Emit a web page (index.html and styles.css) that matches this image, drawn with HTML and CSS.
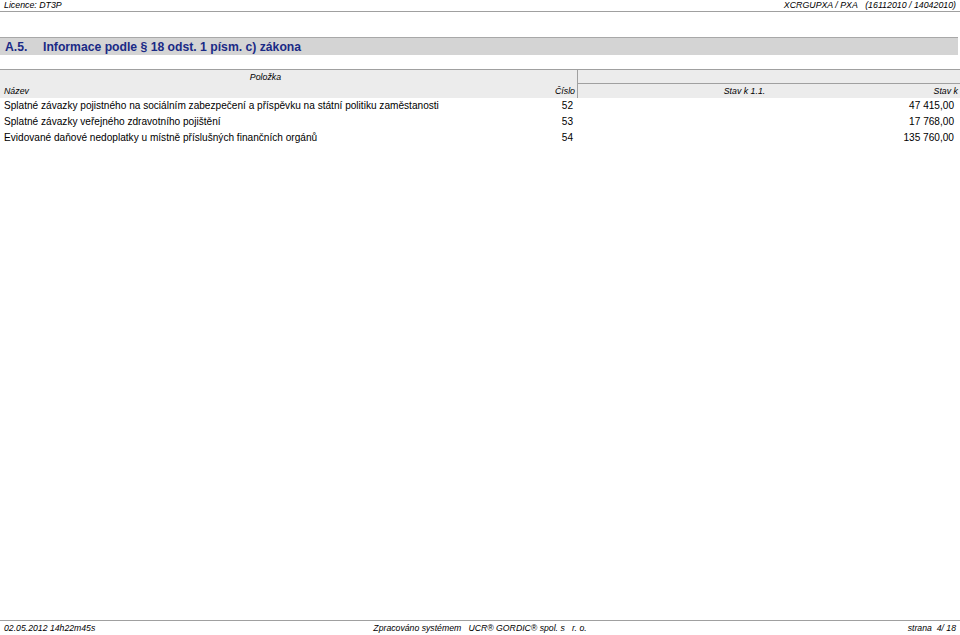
FILE: index.html
```html
<!DOCTYPE html>
<html lang="cs">
<head>
<meta charset="utf-8">
<title>A.5. Informace podle § 18 odst. 1 písm. c) zákona</title>
<link rel="stylesheet" href="styles.css">
</head>
<body>
<div class="page">
  <header class="top">
    <span>Licence: DT3P</span>
    <span>XCRGUPXA / PXA&nbsp;&nbsp;&nbsp;(16112010 / 14042010)</span>
  </header>
  <div class="band"><span class="band-no">A.5.</span><span class="title">Informace podle § 18 odst. 1 písm. c) zákona</span></div>
  <div class="grid">
    <div class="hd hd-item center">Položka</div>
    <div class="hd hd-blank"></div>
    <div class="hd hd-name">Název</div>
    <div class="hd hd-num right">Číslo</div>
    <div class="hd hd-a center">Stav k 1.1.</div>
    <div class="hd hd-b right">Stav k</div>

    <div class="cell name">Splatné závazky pojistného na sociálním zabezpečení a příspěvku na státní politiku zaměstanosti</div>
    <div class="cell code">52</div>
    <div class="cell"></div>
    <div class="cell val">47 415,00</div>

    <div class="cell name">Splatné závazky veřejného zdravotního pojištění</div>
    <div class="cell code">53</div>
    <div class="cell"></div>
    <div class="cell val">17 768,00</div>

    <div class="cell name">Evidované daňové nedoplatky u místně příslušných finančních orgánů</div>
    <div class="cell code">54</div>
    <div class="cell"></div>
    <div class="cell val">135 760,00</div>
  </div>
  <div class="spacer"></div>
  <footer class="bottom">
    <span class="f-left">02.05.2012 14h22m45s</span>
    <span class="f-mid">Zpracováno systémem&nbsp;&nbsp;&nbsp;UCR® GORDIC® spol. s&nbsp;&nbsp;&nbsp;r. o.</span>
    <span class="f-right">strana&nbsp;&nbsp;4/ 18</span>
  </footer>
</div>
</body>
</html>
```
FILE: styles.css
```css
html, body {
  margin: 0;
  padding: 0;
  background: #ffffff;
}
body {
  font-family: "Liberation Sans", Arial, sans-serif;
  color: #000;
}
.page {
  width: 960px;
  height: 635px;
  display: flex;
  flex-direction: column;
}
.top {
  display: flex;
  justify-content: space-between;
  font-size: 8.8px;
  font-style: italic;
  padding: 0 4px 0 4px;
  height: 11px;
  line-height: 10px;
  border-bottom: 1px solid #a0a0a0;
}
.band {
  margin: 25px 2px 0 0;
  height: 17px;
  background: #d4d4d4;
  border-top: 1px solid #a8a8a8;
  color: #1a2a86;
  font-size: 12.2px;
  font-weight: bold;
  line-height: 18px;
  padding-left: 5px;
  white-space: nowrap;
}
.band-no {
  display: inline-block;
  width: 38px;
}
.grid {
  margin-top: 14px;
  display: grid;
  grid-template-columns: 513px 64px 300px 83px;
  grid-template-rows: 15px 14px;
  grid-auto-rows: 16px;
  font-size: 10.1px;
}
.hd {
  background: #ececec;
  font-style: italic;
  font-size: 8.8px;
  padding: 0 2px;
  white-space: nowrap;
}
.hd-item {
  grid-column: 1 / 3;
  border-top: 1px solid #a0a0a0;
  line-height: 14px;
  padding-right: 48px;
}
.hd-blank {
  grid-column: 3 / 5;
  border-top: 1px solid #a0a0a0;
  border-left: 1px solid #a0a0a0;
  border-bottom: 1px solid #a0a0a0;
}
.hd-name, .hd-num, .hd-a, .hd-b {
  line-height: 14px;
}
.hd-name { padding-left: 4px; }
.hd-a {
  border-left: 1px solid #a0a0a0;
  padding-left: 36px;
}
.cell {
  line-height: 16px;
  white-space: nowrap;
  padding: 0 3px 0 4px;
}
.code {
  text-align: right;
  padding-right: 4px;
}
.val {
  text-align: right;
  padding-right: 6px;
}
.left { text-align: left; }
.right { text-align: right; }
.center { text-align: center; }
.spacer {
  flex: 1;
}
.bottom {
  display: grid;
  grid-template-columns: 1fr auto 1fr;
  border-top: 1px solid #a0a0a0;
  font-size: 8.7px;
  font-style: italic;
  line-height: 11px;
  height: 12px;
  padding: 2px 4px 0 4px;
}
.f-mid { text-align: center; }
.f-right { text-align: right; }
```
